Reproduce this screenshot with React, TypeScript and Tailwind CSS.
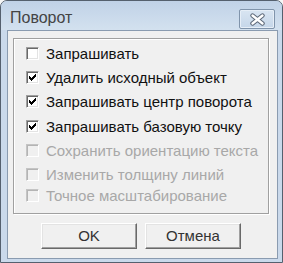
import React from "react";

const options = [
  { label: "Запрашивать", checked: false, disabled: false, mt: "mt-[8px]" },
  { label: "Удалить исходный объект", checked: true, disabled: false, mt: "mt-[11px]" },
  { label: "Запрашивать центр поворота", checked: true, disabled: false, mt: "mt-[11px]" },
  { label: "Запрашивать базовую точку", checked: true, disabled: false, mt: "mt-[12px]" },
  { label: "Сохранить ориентацию текста", checked: false, disabled: true, mt: "mt-[11px]" },
  { label: "Изменить толщину линий", checked: false, disabled: true, mt: "mt-[11px]" },
  { label: "Точное масштабирование", checked: false, disabled: true, mt: "mt-[8px]" },
];

// classic 7x7 check glyph
const checkPixels = [
  [6, 0], [5, 1], [6, 1], [0, 2], [4, 2], [5, 2], [6, 2],
  [0, 3], [1, 3], [3, 3], [4, 3], [5, 3],
  [0, 4], [1, 4], [2, 4], [3, 4], [4, 4],
  [1, 5], [2, 5], [3, 5], [2, 6],
];

function CheckBox({ checked, disabled }: { checked: boolean; disabled: boolean }) {
  return (
    <div
      className={
        disabled
          ? "w-[13px] h-[13px] shrink-0 border-t border-l border-[#c4c4c4] border-r border-b border-r-white border-b-white bg-[#f0f0f0] shadow-[inset_1px_1px_0_#b4b4b4]"
          : "w-[13px] h-[13px] shrink-0 border-t border-l border-[#a0a0a0] border-r border-b border-r-white border-b-white bg-white shadow-[inset_1px_1px_0_#696969,inset_-1px_-1px_0_#e3e3e3]"
      }
    >
      {checked && (
        <svg width="11" height="11" viewBox="0 0 11 11" shapeRendering="crispEdges">
          {checkPixels.map(([x, y]) => (
            <rect key={`${x}-${y}`} x={x + 2} y={y + 2} width="1" height="1" fill="#000" />
          ))}
        </svg>
      )}
    </div>
  );
}

function DialogButton({ children }: { children: React.ReactNode }) {
  return (
    <button className="w-[96px] h-[26px] flex items-center justify-center bg-[#f0f0f0] border-t border-l border-white border-r border-b border-r-[#696969] border-b-[#696969] shadow-[inset_-1px_-1px_0_#a0a0a0,inset_1px_1px_0_#e3e3e3] text-[15px] text-[#333] font-['Liberation_Sans',sans-serif]">
      {children}
    </button>
  );
}

export default function App() {
  return (
    <div className="w-[283px] h-[263px] bg-[#f6f6f6]">
      <div className="flex flex-col h-full rounded-t-[7px] border border-[#55606e] bg-[#cad9eb] pl-[6px] pr-[4px] pb-[3px]">
        {/* title bar */}
        <div className="h-[29px] flex items-start justify-between pt-[8px] bg-gradient-to-b from-[#c0d2e7] to-[#d3e1ef] -ml-[6px] -mr-[4px] pl-[9px] pr-[7px] rounded-t-[6px]">
          <span className="text-[16px] leading-[17px] text-[#444] font-['Liberation_Sans',sans-serif]">
            Поворот
          </span>
          <div className="w-[36px] h-[20px] flex items-center justify-center border border-[#8094ab] rounded-[2px] bg-gradient-to-b from-[#d9e5f2] to-[#c5d6e9] shadow-[inset_0_0_0_1px_#e6eef7]">
            <svg width="17" height="13" viewBox="0 0 17 13">
              <path d="M3.5 2.5 L13.5 10.5 M13.5 2.5 L3.5 10.5" stroke="#5b6676" strokeWidth="4.4" strokeLinecap="round" />
              <path d="M3.5 2.5 L13.5 10.5 M13.5 2.5 L3.5 10.5" stroke="#ffffff" strokeWidth="2.4" strokeLinecap="round" />
            </svg>
          </div>
        </div>

        {/* client area */}
        <div className="flex-1 flex flex-col border border-[#8a9bb0] bg-[#f0f0f0] pl-[5px] pt-[7px]">
          <div className="w-[256px] h-[176px] flex flex-col border border-[#a0a0a0] shadow-[inset_1px_1px_0_#fff,1px_1px_0_#fff] pl-[12px]">
            {options.map((o) => (
              <div key={o.label} className={`${o.mt} h-[13px] flex items-center gap-[7px]`}>
                <CheckBox checked={o.checked} disabled={o.disabled} />
                <span
                  className={
                    o.disabled
                      ? "text-[15px] leading-[17px] whitespace-nowrap text-[#a8a8a8] font-['Liberation_Sans',sans-serif]"
                      : "text-[15px] leading-[17px] whitespace-nowrap text-[#111] font-['Liberation_Sans',sans-serif]"
                  }
                >
                  {o.label}
                </span>
              </div>
            ))}
          </div>

          <div className="mt-[9px] ml-[28px] flex gap-[8px]">
            <DialogButton>OK</DialogButton>
            <DialogButton>Отмена</DialogButton>
          </div>
        </div>
      </div>
    </div>
  );
}
